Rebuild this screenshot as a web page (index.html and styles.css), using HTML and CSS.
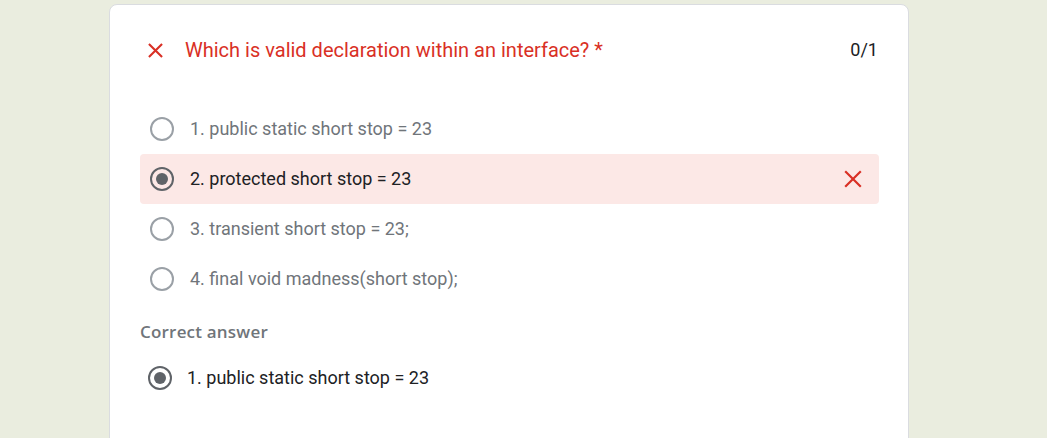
FILE: index.html
```html
<!DOCTYPE html>
<html>
<head>
<meta charset="utf-8">
<link rel="stylesheet" href="styles.css">
</head>
<body>
<div class="card">
  <div class="header">
    <svg class="xicon" width="24" height="24" viewBox="0 0 24 24"><path d="M4.5 4.5 19.5 19.5M19.5 4.5 4.5 19.5" stroke="#d93025" stroke-width="2.4" fill="none"/></svg>
    <div class="title">Which is valid declaration within an interface? *</div>
    <div class="score">0/1</div>
  </div>
  <div class="options">
    <div class="opt"><span class="radio"></span><span class="label">1. public static short stop = 23</span></div>
    <div class="opt wrong"><span class="radio on"></span><span class="label">2. protected short stop = 23</span>
      <svg class="xicon right" width="24" height="24" viewBox="0 0 24 24"><path d="M3.5 3.5 20.5 20.5M20.5 3.5 3.5 20.5" stroke="#d93025" stroke-width="2.4" fill="none"/></svg>
    </div>
    <div class="opt"><span class="radio"></span><span class="label">3. transient short stop = 23;</span></div>
    <div class="opt"><span class="radio"></span><span class="label">4. final void madness(short stop);</span></div>
  </div>
  <div class="correct-title">Correct answer</div>
  <div class="correct"><span class="radio on"></span><span class="label">1. public static short stop = 23</span></div>
</div>
</body>
</html>
```
FILE: styles.css
```css
html, body { margin: 0; padding: 0; }
body {
  background: #eaeddf;
  font-family: Roboto, "Liberation Sans", sans-serif;
  height: 438px;
  overflow: hidden;
}
.card {
  margin: 4px 0 0 109px;
  width: 798px;
  height: 440px;
  background: #fff;
  border: 1px solid #dadce0;
  border-radius: 8px;
}
.header {
  display: flex;
  align-items: center;
  padding: 33px 30px 0 35px;
  height: 24px;
}
.xicon { flex: none; }
.header .xicon { width: 21px; height: 21px; }
.title {
  flex: 1;
  margin-left: 19px;
  color: #d93025;
  font-size: 20px;
  line-height: 24px;
}
.score {
  color: #202124;
  font-size: 18px;
  line-height: 24px;
}
.options {
  margin: 42px 29px 0 30px;
}
.opt {
  display: flex;
  align-items: center;
  height: 50px;
  padding-left: 10px;
  border-radius: 4px;
}
.opt.wrong { background: #fce8e6; }
.opt.wrong .label { color: #202124; }
.opt .right { margin-left: auto; margin-right: 15px; width: 22px; height: 22px; }
.radio {
  flex: none;
  width: 24px;
  height: 24px;
  border: 2px solid #9aa0a6;
  border-radius: 50%;
  box-sizing: border-box;
  position: relative;
  margin-right: 16px;
}
.radio.on { border-color: #5f6368; }
.radio.on::after {
  content: "";
  position: absolute;
  left: 4px; top: 4px;
  width: 12px; height: 12px;
  border-radius: 50%;
  background: #5f6368;
}
.label {
  font-size: 18px;
  line-height: 24px;
  color: #70757a;
}
.correct-title {
  margin: 18px 0 0 30px;
  font-family: "Open Sans", Roboto, sans-serif;
  font-weight: 600;
  font-size: 17px;
  letter-spacing: 0.2px;
  line-height: 20px;
  color: #70757a;
}
.correct {
  display: flex;
  align-items: center;
  height: 40px;
  margin: 16px 0 0 38px;
}
.correct .label { color: #202124; }
.correct .radio { margin-right: 15px; }
```
